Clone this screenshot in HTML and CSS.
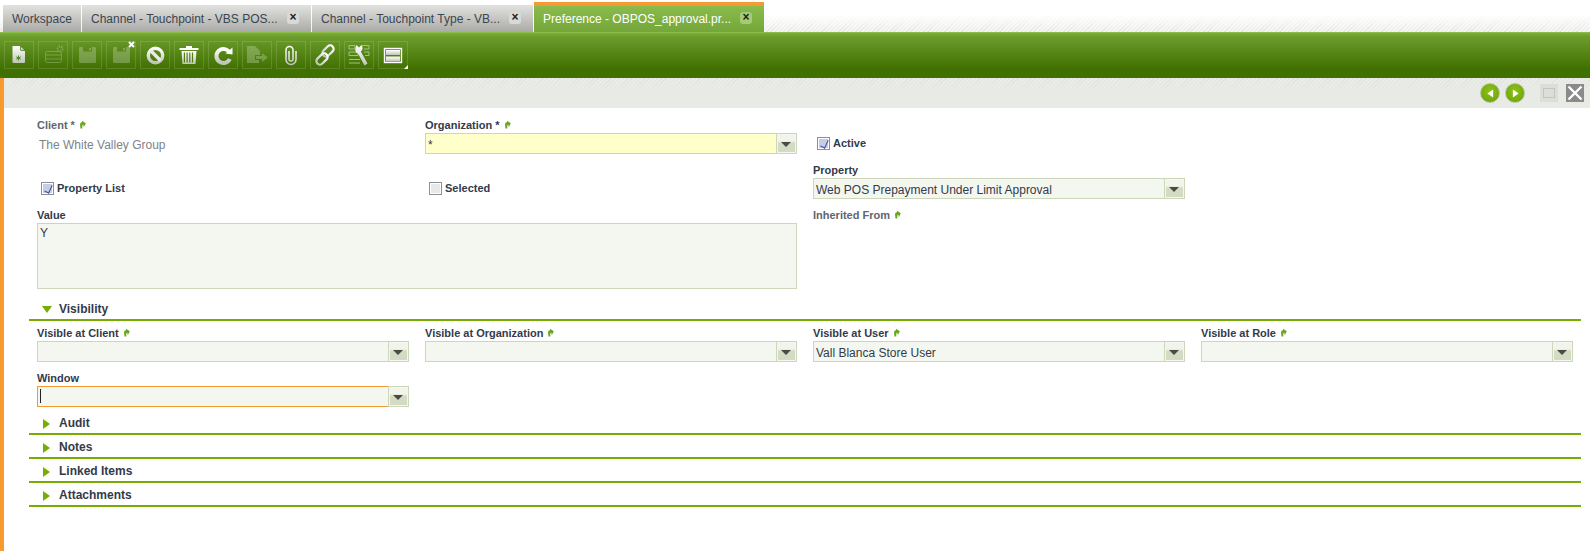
FILE: index.html
```html
<!DOCTYPE html>
<html lang="en">
<head>
<meta charset="utf-8">
<title>Preference</title>
<link rel="stylesheet" href="styles.css">
</head>
<body>
<svg class="defs" width="0" height="0" aria-hidden="true">
  <defs>
    <linearGradient id="ig" x1="0" y1="0" x2="0" y2="1"><stop offset="0" stop-color="#ffffff"/><stop offset="1" stop-color="#bfc4b8"/></linearGradient>
    <symbol id="up" viewBox="0 0 7 9"><path d="M1.500 8.500 L1 4.500 Q1 2.200 3 2.200 L3 0.700 L6.800 3.300 L4.800 7.200 L4.300 4.800 Q3.300 4.800 3.300 6 V8.500 Z" fill="#6aa51f"/></symbol>
    <symbol id="floppy" viewBox="0 0 30 28"><path d="M8 6 H23 L24 7 V21 Q24 22 23 22 H8 Q7 22 7 21 V7 Q7 6 8 6 Z M11 6 V10.500 H20 V6 Z M17 7 V9.500 H19 V7 Z" fill-rule="evenodd" fill="#fff" opacity=".24"/></symbol>
  </defs>
</svg>
<header class="tabbar">
  <div class="tab tab-first"><span class="tab-text">Workspace</span></div>
  <div class="tab tab-w2"><span class="tab-text">Channel - Touchpoint - VBS POS...</span><span class="tab-close">×</span></div>
  <div class="tab tab-w3"><span class="tab-text">Channel - Touchpoint Type - VB...</span><span class="tab-close">×</span></div>
  <div class="tab tab-active"><span class="tab-text">Preference - OBPOS_approval.pr...</span><span class="tab-close">×</span></div>
</header>
<nav class="toolbar">
  <button class="tb"><svg viewBox="0 0 30 28"><path d="M8.500 5 H16 L21 10 V21 Q21 22 20 22 H9.500 Q8.500 22 8.500 21 Z" fill="url(#ig)"/><path d="M16.700 5 V9.300 H21" fill="none" stroke="#4f7f1a" stroke-width="1"/><path d="M14.500 14.500 V19.500 M12.300 15.800 L16.700 18.200 M16.700 15.800 L12.300 18.200" stroke="#4f8a14" stroke-width="1"/></svg></button>
  <button class="tb"><svg viewBox="0 0 30 28"><g opacity=".24" fill="none" stroke="#fff"><rect x="7.500" y="10.500" width="16" height="11" rx="2"/><path d="M8 14 H23 M8 18 H23"/><circle cx="22" cy="8" r="2.500" stroke-dasharray="1.500 1" stroke-width="2"/></g></svg></button>
  <button class="tb"><svg viewBox="0 0 30 28"><use href="#floppy"/></svg></button>
  <button class="tb"><svg viewBox="0 0 30 28"><use href="#floppy"/></svg><svg class="x-badge" viewBox="0 0 7 7"><path d="M1 1 L6 6 M6 1 L1 6" stroke="#fff" stroke-width="2"/></svg></button>
  <button class="tb"><svg viewBox="0 0 30 28"><circle cx="15.500" cy="14.500" r="7.200" fill="none" stroke="url(#ig)" stroke-width="3.400"/><path d="M10.500 9.500 L20.500 19.500" stroke="#e9ebe6" stroke-width="3.400"/></svg></button>
  <button class="tb"><svg viewBox="0 0 30 28"><path d="M5.500 7 H12 V5 H18 V7 H24.500 V9 H5.500 Z" fill="#fff"/><path d="M7.500 10 H22.500 L21.500 23 H8.500 Z M9.800 11.500 V21.500 H11 V11.500 Z M12.500 11.500 V21.500 H13.700 V11.500 Z M15.200 11.500 V21.500 H16.400 V11.500 Z M17.900 11.500 V21.500 H19.100 V11.500 Z" fill="url(#ig)" fill-rule="evenodd"/></svg></button>
  <button class="tb"><svg viewBox="0 0 30 28"><path d="M21.500 11.500 A7 7 0 1 0 21.800 18" fill="none" stroke="url(#ig)" stroke-width="4"/><path d="M17.500 12.500 L24.500 13.500 L24.500 6.500 Z" fill="#fff"/></svg></button>
  <button class="tb"><svg viewBox="0 0 30 28"><g fill="#fff" opacity=".24"><path d="M5 5 H13 L18 10 V14 H13 V19 H17 V22 H5 Z"/><path d="M14 15 H20 V12 L26 16.500 L20 21 V18 H14 Z"/></g></svg></button>
  <button class="tb"><svg viewBox="0 0 30 28"><path d="M20 10 V18.500 A5 5 0 0 1 10 18.500 V9 A3.500 3.500 0 0 1 17 9 V18 A2 2 0 0 1 13 18 V10" fill="none" stroke="url(#ig)" stroke-width="1.600"/></svg></button>
  <button class="tb"><svg viewBox="0 0 30 28"><g fill="none" stroke="url(#ig)" stroke-width="2.200"><rect x="14.500" y="3.500" width="7" height="13" rx="3.500" transform="rotate(45 18 10)"/><rect x="8.500" y="11.500" width="7" height="13" rx="3.500" transform="rotate(45 12 18)"/></g></svg></button>
  <button class="tb"><svg viewBox="0 0 30 28"><path d="M5 4.500 H11 V8 H5 Z M18 4.500 H25 V8 H20 M5 11 H14 V14.500 H5 Z M20 11 H25 V14.500 H21 M5 18.500 H16 M5 22 H16" fill="none" stroke="#a3c184" stroke-width="1"/><path d="M12.500 4 L15 6.500 L17.500 4 Q20 8 16.800 10.500 L23.500 22.500 L20.500 24.500 L14 12.500 Q10.500 12 11.500 6.500 Z" fill="url(#ig)"/></svg></button>
  <button class="tb"><svg viewBox="0 0 30 28"><rect x="6.500" y="7.500" width="17" height="14" fill="none" stroke="#fff" stroke-width="1.400"/><rect x="8" y="9" width="14" height="5" fill="url(#ig)"/><rect x="8" y="15.500" width="14" height="5" fill="url(#ig)"/></svg><span class="tb-corner"></span></button>
</nav>
<main class="main">
  <div class="navbar">
    <span class="nav-round"><svg viewBox="0 0 8 10"><path d="M7 0.500 V9.500 L0.500 5 Z" fill="#fff"/></svg></span>
    <span class="nav-round"><svg viewBox="0 0 8 10"><path d="M1 0.500 V9.500 L7.500 5 Z" fill="#fff"/></svg></span>
    <span class="nav-max"><span class="nav-max-in"></span></span>
    <span class="nav-close"><svg viewBox="0 0 18 18"><path d="M2.500 2.500 L15.500 15.500 M15.500 2.500 L2.500 15.500" stroke="#fff" stroke-width="2.400"/></svg></span>
  </div>
  <form class="grid grid-main">
    <div class="cell"><label class="lbl lbl-ro">Client * <svg class="up"><use href="#up"/></svg></label><div class="static">The White Valley Group</div></div>
    <div class="cell"><label class="lbl">Organization * <svg class="up"><use href="#up"/></svg></label><div class="combo combo-req"><span class="combo-in">*</span><span class="combo-btn"></span></div></div>
    <div class="cell"><label class="lbl lbl-empty"></label><div class="check"><span class="cb cb-on"></span>Active</div></div>
    <div class="cell"></div>

    <div class="cell"><label class="lbl lbl-empty"></label><div class="check"><span class="cb cb-on"></span>Property List</div></div>
    <div class="cell"><label class="lbl lbl-empty"></label><div class="check"><span class="cb"></span>Selected</div></div>
    <div class="cell"><label class="lbl">Property</label><div class="combo"><span class="combo-in">Web POS Prepayment Under Limit Approval</span><span class="combo-btn"></span></div></div>
    <div class="cell"></div>

    <div class="cell cell-value"><label class="lbl">Value</label><div class="textarea">Y</div></div>
    <div class="cell"><label class="lbl lbl-ro">Inherited From <svg class="up"><use href="#up"/></svg></label></div>
  </form>
  <section class="sec"><span class="tri-down"></span><h2 class="sec-t">Visibility</h2></section>
  <div class="grid grid-vis">
    <div class="cell"><label class="lbl">Visible at Client <svg class="up"><use href="#up"/></svg></label><div class="combo"><span class="combo-in"></span><span class="combo-btn"></span></div></div>
    <div class="cell"><label class="lbl">Visible at Organization <svg class="up"><use href="#up"/></svg></label><div class="combo"><span class="combo-in"></span><span class="combo-btn"></span></div></div>
    <div class="cell"><label class="lbl">Visible at User <svg class="up"><use href="#up"/></svg></label><div class="combo"><span class="combo-in">Vall Blanca Store User</span><span class="combo-btn"></span></div></div>
    <div class="cell"><label class="lbl">Visible at Role <svg class="up"><use href="#up"/></svg></label><div class="combo"><span class="combo-in"></span><span class="combo-btn"></span></div></div>
    <div class="cell"><label class="lbl">Window</label><div class="combo combo-focus"><span class="combo-in"><span class="caret"></span></span><span class="combo-btn"></span></div></div>
  </div>
  <section class="sec"><span class="tri-right"></span><h2 class="sec-t">Audit</h2></section>
  <section class="sec"><span class="tri-right"></span><h2 class="sec-t">Notes</h2></section>
  <section class="sec"><span class="tri-right"></span><h2 class="sec-t">Linked Items</h2></section>
  <section class="sec"><span class="tri-right"></span><h2 class="sec-t">Attachments</h2></section>
</main>
</body>
</html>
```

FILE: styles.css
```css
* { box-sizing: border-box; }
html, body { margin: 0; padding: 0; height: 100%; }
body { width: 1590px; height: 551px; overflow: hidden; background: #fff; font-family: "Liberation Sans", Arial, sans-serif; color: #333a4a; display: flex; flex-direction: column; }
.defs { position: absolute; }

/* tabs */
.tabbar { height: 32px; display: flex; align-items: flex-end; padding-left: 3px; gap: 1px; flex: none;
  background: linear-gradient(to bottom, rgba(255,255,255,1) 45%, rgba(255,255,255,.25) 100%), repeating-linear-gradient(135deg, #dcdeda 0 1px, #f0f1ee 1px 3px); }
.tab { height: 27px; display: flex; align-items: center; padding: 0 9px; font-size: 12px; color: #3c4450; background: linear-gradient(#e2e3e0, #a9aaa6); position: relative; }
.tab-first { width: 78px; }
.tab-w2 { width: 229px; }
.tab-w3 { width: 221px; }
.tab-text { white-space: nowrap; }
.tab-close { position: absolute; right: 12px; top: 7px; width: 12px; height: 12px; border-radius: 3px; background: #d9dad6; color: #222; font-size: 12px; font-weight: bold; line-height: 11px; text-align: center; }
.tab-active { width: 230px; height: 30px; background: linear-gradient(#8abb4c, #74a63a); color: #fff; border-top: 4px solid #f39a32; }
.tab-active .tab-close { top: 6px; background: #a3cc74; color: #222; }

/* toolbar */
.toolbar { height: 46px; flex: none; background: linear-gradient(#7cae3a 0, #6c9c2c 8%, #3f7000 80%, #3f7000 100%); border-top: 1px solid #8cbc48; display: flex; gap: 4px; padding: 8px 0 0 4px; }
.tb { width: 30px; height: 28px; padding: 0; background: none; border: 1px solid rgba(255,255,255,.14); position: relative; display: block; }
.tb svg { position: absolute; left: -1px; top: -1px; width: 30px; height: 28px; display: block; }
.tb svg.x-badge { left: 21px; top: -1px; width: 7px; height: 7px; }
.tb-corner { position: absolute; right: -1px; bottom: -1px; width: 0; height: 0; border-left: 4px solid transparent; border-bottom: 4px solid #fff; }

/* main */
.main { flex: 1; border-left: 4px solid #f89a2e; display: flex; flex-direction: column; }
.navbar { height: 30px; flex: none; display: flex; align-items: center; justify-content: flex-end; padding-right: 6px; gap: 5px; background: linear-gradient(rgba(232,234,230,0), #e8eae6 50%), repeating-linear-gradient(135deg, #e0e2de 0 1px, #ecedea 1px 3px); background-color: #e8eae6; }
.nav-round { width: 20px; height: 20px; border-radius: 50%; background: radial-gradient(circle at 50% 40%, #8ec31a, #74a80f 70%); border: 1px solid #b3c99c; display: flex; align-items: center; justify-content: center; }
.nav-round svg { width: 7px; height: 9px; }
.nav-max { width: 18px; height: 18px; margin-left: 10px; margin-right: 3px; background: #dcdeda; display: flex; align-items: center; justify-content: center; }
.nav-max-in { width: 12px; height: 10px; border: 1px solid #c3c5c1; }
.nav-close { width: 18px; height: 18px; background: #8a8a8a; display: block; }
.nav-close svg { width: 18px; height: 18px; display: block; }

.grid { display: grid; grid-template-columns: repeat(4, 388px); grid-auto-rows: 45px; padding: 10px 0 0 33px; }
.grid-main { height: 189px; }
.grid-vis { padding-top: 5px; height: 90px; }
.cell { min-width: 0; }
.cell-value { grid-column: span 2; grid-row: span 2; }
.lbl { display: block; height: 15px; line-height: 14px; font-size: 11px; font-weight: bold; color: #333a4a; white-space: nowrap; }
.lbl-ro { color: #5f6670; }
.up { width: 7px; height: 9px; margin-left: 1px; vertical-align: 0; }
.static { font-size: 12px; color: #7e838a; padding: 4px 0 0 2px; line-height: 16px; }
.check { display: flex; align-items: center; gap: 3px; height: 20px; padding-left: 4px; font-size: 11px; font-weight: bold; color: #333a4a; }
.cb { width: 13px; height: 13px; border: 1px solid #8d8f96; box-shadow: inset 0 0 0 1px #fff; background: #e8e8ea; position: relative; flex: none; }
.cb-on { background: #c6cde6; }
.cb-on::after { content: ""; position: absolute; left: 4px; top: 1px; width: 4px; height: 8px; border: solid #3d4f9f; border-width: 0 1.5px 1.5px 0; transform: rotate(25deg); }
.combo { width: 372px; height: 21px; display: flex; border: 1px solid #ccd7ba; background: #f4f7f0; }
.combo-req { background: #ffffcc; }
.combo-in { flex: 1; min-width: 0; font-size: 12px; line-height: 21px; padding: 1px 0 0 2px; color: #333a4a; white-space: nowrap; display: block; overflow: visible; }
.combo-btn { width: 20px; flex: none; border-left: 1px solid #ccd7ba; box-shadow: inset 0 0 0 1px #f4f7f0; background: linear-gradient(#f1f4ea 0, #f1f4ea 35%, #d4dbc4 50%, #d4dbc4 100%); position: relative; }
.combo-btn::after { content: ""; position: absolute; left: 4px; top: 8px; border-style: solid; border-width: 5px 5px 0; border-color: #4b4b43 transparent transparent; }
.combo-focus .combo-in { border: 1px solid #f39a32; border-right: 0; margin: -1px 0 -1px -1px; padding: 0 0 0 2px; }
.caret { display: block; width: 1px; height: 14px; background: #222; margin-top: 2px; }
.textarea { width: 760px; height: 66px; border: 1px solid #ccd7ba; background: #f4f7f0; font-size: 12px; line-height: 14px; padding: 2px 2px; color: #333a4a; }

/* sections */
.sec { height: 24px; flex: none; margin: 0 9px 0 25px; border-bottom: 2px solid #77ad00; display: flex; align-items: center; padding-left: 13px; gap: 7px; }
.sec-t { margin: 2px 0 0; font-size: 12px; font-weight: bold; color: #333a4a; line-height: 20px; }
.tri-down { width: 0; height: 0; border-style: solid; border-width: 7px 5.500px 0; border-color: #77ad00 transparent transparent; margin: 2px 0 0 0; }
.tri-right { width: 0; height: 0; border-style: solid; border-width: 5.500px 0 5.500px 7px; border-color: transparent transparent transparent #77ad00; margin: 3px 2px 0 1px; }
```
